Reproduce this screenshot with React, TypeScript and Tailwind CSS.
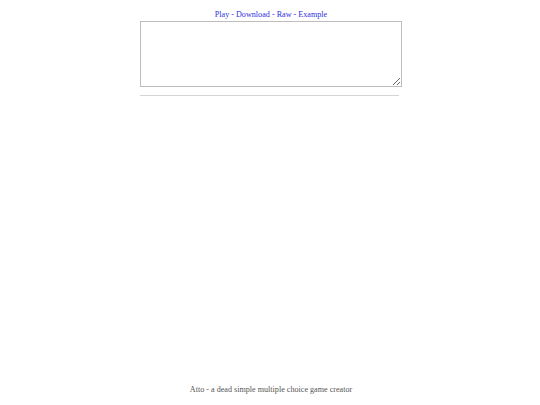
import React from "react";

export default function App() {
  return (
    <div className="flex h-[405px] w-full flex-col items-center bg-white pl-[2px]" style={{ fontFamily: '"Liberation Serif", "Times New Roman", serif' }}>
      <div className="flex w-[262px] flex-col pt-[9px]">
        <div className="text-center text-[8.15px] leading-[12px] text-[#2f2fe0]">
          <a href="#" className="text-[#2f2fe0]">Play</a> - <a href="#" className="text-[#2f2fe0]">Download</a> - <a href="#" className="text-[#2f2fe0]">Raw</a> - <a href="#" className="text-[#2f2fe0]">Example</a>
        </div>
        <textarea className="block h-[66px] w-[262px] border border-[#bdbdbd] bg-white" />
        <hr className="mt-[8px] w-[259px] border-t border-[#d4d4d4]" />
      </div>
      <div className="mt-auto pb-[9px] text-center text-[8.15px] leading-[12px] text-[#555555]">
        Atto - a dead simple multiple choice game creator
      </div>
    </div>
  );
}
